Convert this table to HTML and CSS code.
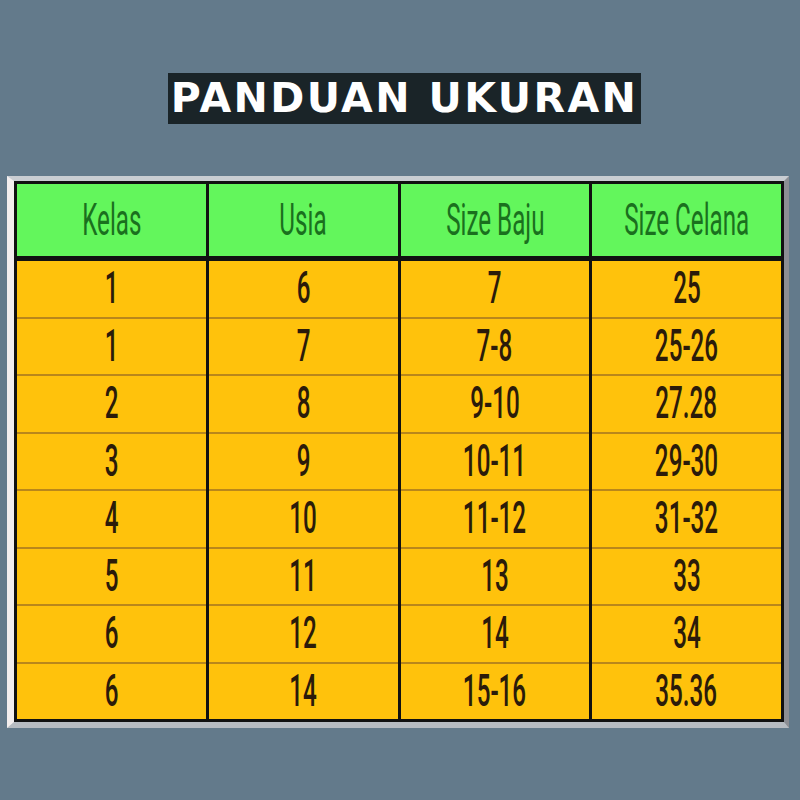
FILE: index.html
```html
<!DOCTYPE html>
<html>
<head>
<meta charset="utf-8">
<link rel="stylesheet" href="styles.css">
</head>
<body>
<div class="page">
  <div class="title-row">
    <h1 class="title">PANDUAN UKURAN</h1>
  </div>
  <div class="frame">
    <table class="size-table">
      <thead>
        <tr>
          <th><span>Kelas</span></th>
          <th><span>Usia</span></th>
          <th><span>Size Baju</span></th>
          <th><span>Size Celana</span></th>
        </tr>
      </thead>
      <tbody>
        <tr><td><span>1</span></td><td><span>6</span></td><td><span>7</span></td><td><span>25</span></td></tr>
        <tr><td><span>1</span></td><td><span>7</span></td><td><span>7-8</span></td><td><span>25-26</span></td></tr>
        <tr><td><span>2</span></td><td><span>8</span></td><td><span>9-10</span></td><td><span>27.28</span></td></tr>
        <tr><td><span>3</span></td><td><span>9</span></td><td><span>10-11</span></td><td><span>29-30</span></td></tr>
        <tr><td><span>4</span></td><td><span>10</span></td><td><span>11-12</span></td><td><span>31-32</span></td></tr>
        <tr><td><span>5</span></td><td><span>11</span></td><td><span>13</span></td><td><span>33</span></td></tr>
        <tr><td><span>6</span></td><td><span>12</span></td><td><span>14</span></td><td><span>34</span></td></tr>
        <tr><td><span>6</span></td><td><span>14</span></td><td><span>15-16</span></td><td><span>35.36</span></td></tr>
      </tbody>
    </table>
  </div>
</div>
</body>
</html>
```

FILE: styles.css
```css
html, body {
  margin: 0;
  padding: 0;
}
body {
  background: #637a8b;
  width: 800px;
  height: 800px;
  overflow: hidden;
}
.page {
  display: flex;
  flex-direction: column;
  padding-top: 73px;
}
.title-row {
  display: flex;
  padding-left: 168px;
}
.title {
  margin: 0;
  width: 473px;
  height: 51px;
  box-sizing: border-box;
  background: #1a2428;
  color: #ffffff;
  font-family: "DejaVu Sans", sans-serif;
  font-weight: bold;
  font-size: 41px;
  letter-spacing: 2.4px;
  line-height: 51px;
  text-align: center;
  white-space: nowrap;
}
.frame {
  margin-top: 52px;
  margin-left: 7px;
  width: 782px;
  box-sizing: border-box;
  border-left: 7px solid #f3eeee;
  border-top: 5px solid #c9cdd2;
  border-bottom: 6px solid #b7bcc2;
  border-right: 5px solid #8c8e94;
  background: #c9cdd2;
}
.size-table {
  border-collapse: collapse;
  border: 3px solid #111;
  table-layout: fixed;
  width: 770px;
  background: #ffc20c;
}
.size-table th,
.size-table td {
  padding: 0;
  text-align: center;
  white-space: nowrap;
  font-family: Roboto, "Liberation Sans", sans-serif;
  font-weight: 500;
  font-size: 44px;
  border-left: 3px solid #111;
  border-right: 3px solid #111;
}
.size-table span {
  display: inline-block;
  margin: 0 -60px;
  transform: scaleX(0.55);
  transform-origin: center;
}
.size-table th {
  background: #63f65c;
  color: #1a701e;
  font-weight: 400;
  height: 72px;
  border-bottom: 5px solid #111;
  line-height: 72px;
}
.size-table td {
  color: #2b1b0a;
  height: 55.5px;
  line-height: 55px;
  border-bottom: 2px solid #b9871b;
}
.size-table tbody tr:last-child td {
  border-bottom: 3px solid #111;
}
```
